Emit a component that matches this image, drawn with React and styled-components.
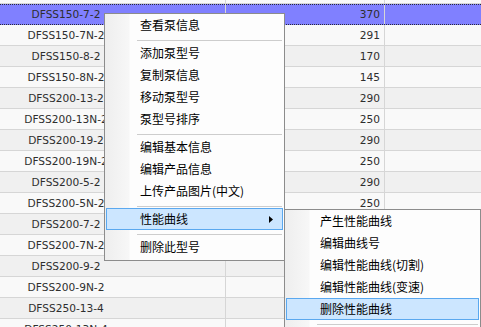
import React from 'react';
import styled, { createGlobalStyle } from 'styled-components';

const GlobalStyle = createGlobalStyle`
  html, body {
    margin: 0;
    padding: 0;
    background: #f9f9f9;
    overflow: hidden;
  }
`;

const Screen = styled.div`
  position: relative;
  width: 481px;
  height: 327px;
  overflow: hidden;
  background: #f9f9f9;
`;

const Table = styled.div`
  margin-top: -17px;
  font-family: "DejaVu Sans", Tahoma, sans-serif;
  font-size: 10.6px;
  color: #2e2e2e;
`;

const Row = styled.div`
  position: relative;
  display: grid;
  grid-template-columns: 226px 159px 1fr;
  height: 21px;
  box-sizing: border-box;
  border-bottom: 1px ${p => (p.$selected ? 'dotted #2a2a3a' : 'solid #d6d6d6')};
  background: ${p => (p.$selected ? '#8080ff' : p.$odd ? '#f9f9f9' : '#f0f0f0')};

  ${p => p.$selected && `
    &::before {
      content: '';
      position: absolute;
      left: 0;
      right: 0;
      top: 0;
      border-top: 1px dotted #2a2a3a;
    }
  `}
`;

const Cell = styled.div`
  box-sizing: border-box;
  line-height: 20px;
  white-space: nowrap;
  overflow: hidden;
  border-right: 1px solid ${p => (p.$last ? 'transparent' : '#d6d6d6')};
  text-align: ${p => p.$align || 'left'};
  padding-right: ${p => p.$pr || 0}px;
`;

const Menu = styled.div`
  position: absolute;
  left: ${p => p.$left}px;
  top: ${p => p.$top}px;
  width: ${p => p.$width}px;
  box-sizing: border-box;
  border: 1px solid #8c8c8c;
  padding: 0 1px ${p => p.$pb || 0}px 1px;
  background: linear-gradient(to right, #eeeeee 0, #f7f7f7 24px, #fdfdfd 25px);
  font-family: "Noto Sans CJK SC", "Noto Sans", sans-serif;
  font-size: 12px;
  color: #000;
`;

const Item = styled.div`
  display: flex;
  align-items: center;
  justify-content: space-between;
  height: 22px;
  box-sizing: border-box;
  padding: 0 9px 0 33px;
  border: 1px solid ${p => (p.$active ? '#5aa8ef' : 'transparent')};
  background: ${p => (p.$active ? '#cce6ff' : 'transparent')};
  line-height: 20px;
  white-space: nowrap;
`;

const Separator = styled.div`
  height: 1px;
  margin: 4px 1px 1px 31px;
  background: #cdcdcd;
`;

const Arrow = () => (
  <svg width="4" height="7" viewBox="0 0 4 7">
    <path d="M0 0 L4 3.5 L0 7 Z" fill="#000" />
  </svg>
);

// values under the open menus are not visible, so they stay empty
const rows = [
  ['DFSS150-6N-2', ''],
  ['DFSS150-7-2', '370'],
  ['DFSS150-7N-2', '291'],
  ['DFSS150-8-2', '170'],
  ['DFSS150-8N-2', '145'],
  ['DFSS200-13-2', '290'],
  ['DFSS200-13N-2', '250'],
  ['DFSS200-19-2', '290'],
  ['DFSS200-19N-2', '250'],
  ['DFSS200-5-2', '290'],
  ['DFSS200-5N-2', '250'],
  ['DFSS200-7-2', ''],
  ['DFSS200-7N-2', ''],
  ['DFSS200-9-2', ''],
  ['DFSS200-9N-2', ''],
  ['DFSS250-13-4', ''],
  ['DFSS250-13N-4', ''],
];

const mainMenu = [
  '查看泵信息', '-',
  '添加泵型号', '复制泵信息', '移动泵型号', '泵型号排序', '-',
  '编辑基本信息', '编辑产品信息', '上传产品图片(中文)', '-',
  '>性能曲线', '-',
  '删除此型号',
];

const subMenu = [
  '产生性能曲线', '编辑曲线号', '编辑性能曲线(切割)', '编辑性能曲线(变速)', '删除性能曲线', '-',
];

const renderItems = (items, activeLabel) =>
  items.map((it, i) => {
    if (it === '-') return <Separator key={i} />;
    const sub = it.startsWith('>');
    const label = sub ? it.slice(1) : it;
    return (
      <Item key={i} $active={label === activeLabel}>
        <span>{label}</span>
        {sub && <Arrow />}
      </Item>
    );
  });

export default function App() {
  return (
    <Screen>
      <GlobalStyle />
      <Table>
        {rows.map(([name, val], i) => (
          <Row key={name} $selected={i === 1} $odd={i % 2 === 0}>
            <Cell $align="center" $pr={93}>{name}</Cell>
            <Cell $align="right" $pr={4}>{val}</Cell>
            <Cell $last />
          </Row>
        ))}
      </Table>

      <Menu $left={104} $top={13} $width={181} $pb={2}>
        {renderItems(mainMenu, '性能曲线')}
      </Menu>

      <Menu $left={284} $top={209} $width={197} $pb={12}>
        {renderItems(subMenu, '删除性能曲线')}
      </Menu>
    </Screen>
  );
}
